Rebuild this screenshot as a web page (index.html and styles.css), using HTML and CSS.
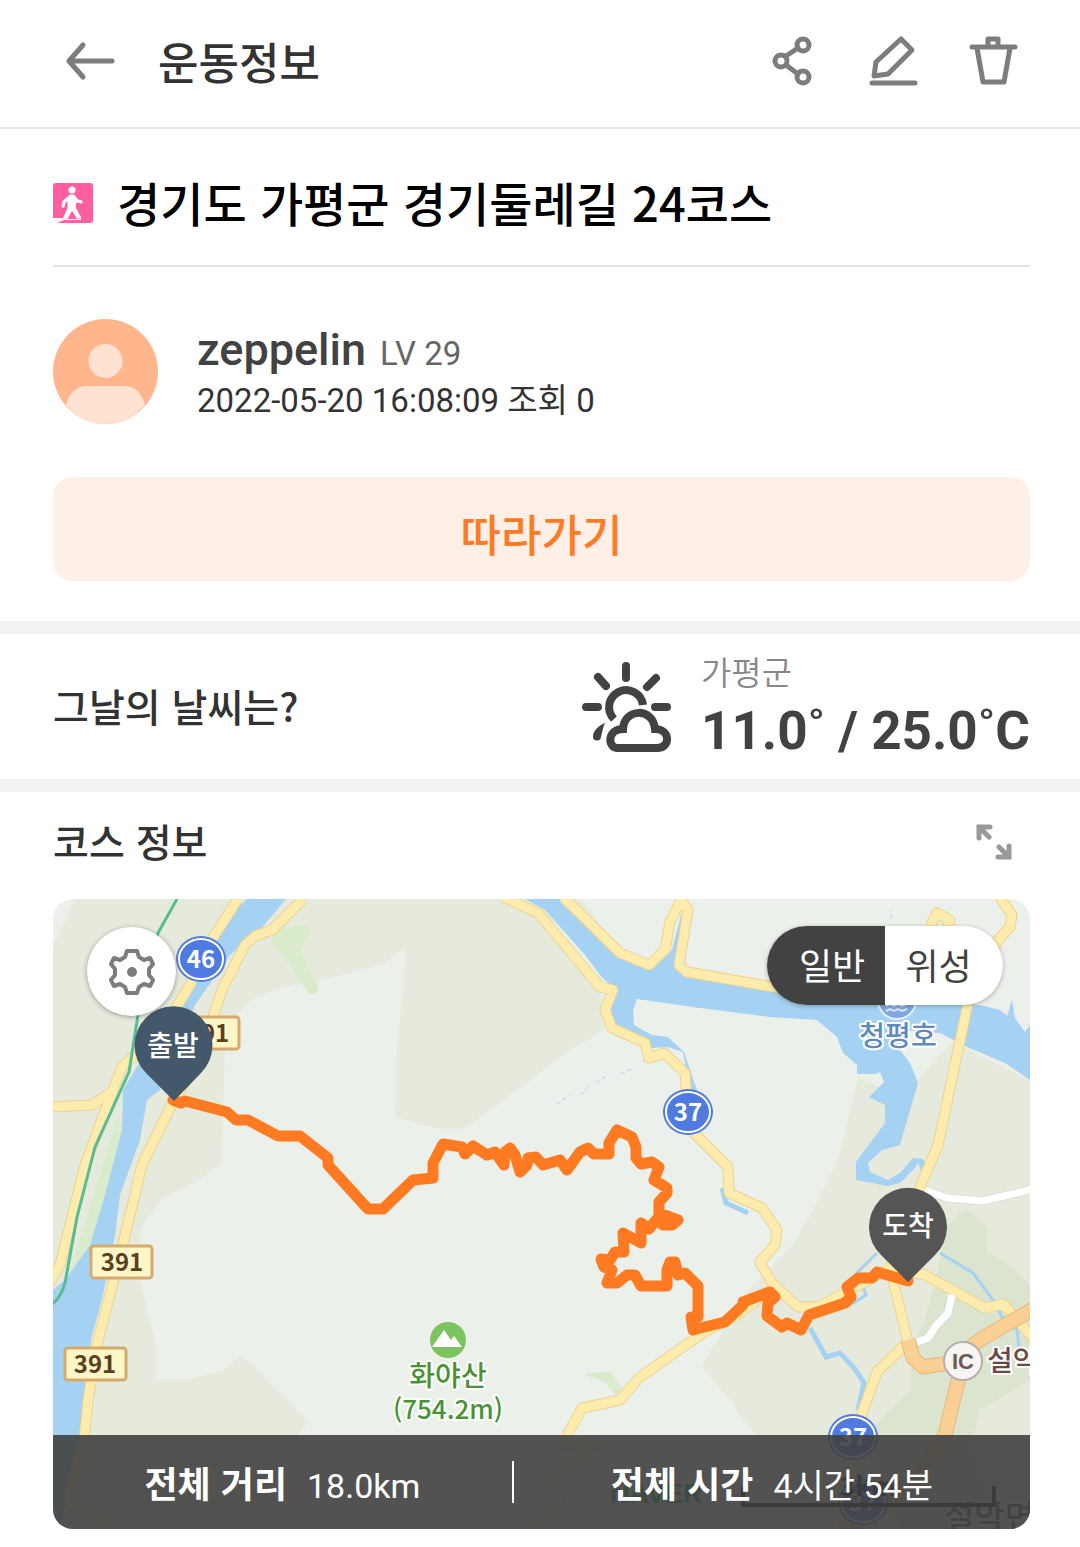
FILE: index.html
```html
<!DOCTYPE html>
<html lang="ko">
<head>
<meta charset="utf-8">
<meta name="viewport" content="width=device-width, initial-scale=1">
<title>운동정보</title>
<link rel="stylesheet" href="styles.css">
</head>
<body>
<header class="topbar">
  <button class="icon-btn" type="button" aria-label="뒤로">
    <svg viewBox="0 0 48 48" class="line-icon"><path d="M18 8 4 24l14 16M4 24h43" stroke-linejoin="round"/></svg>
  </button>
  <h1 class="topbar-title">운동정보</h1>
  <div class="topbar-actions">
    <button class="icon-btn" type="button" aria-label="공유">
      <svg viewBox="0 0 48 48" class="line-icon"><circle cx="34" cy="8" r="6"/><circle cx="12" cy="24" r="6"/><circle cx="34" cy="40" r="6"/><path d="m17 19 12-8M17 28l12 9"/></svg>
    </button>
    <button class="icon-btn" type="button" aria-label="수정">
      <svg viewBox="0 0 48 48" class="line-icon"><path d="M32 2 43 13 19 37 5 39 7 25Z" stroke-linejoin="round"/><path d="M3 46h43"/></svg>
    </button>
    <button class="icon-btn" type="button" aria-label="삭제">
      <svg viewBox="0 0 48 48" class="line-icon"><path d="M19 10V2h10v8M3 10h43" stroke-linejoin="round"/><path d="m8 11 6 34h21l6-34" stroke-linejoin="round"/></svg>
    </button>
  </div>
</header>
<main>
  <section class="intro">
    <div class="course">
      <svg class="walk" viewBox="0 0 40 40" aria-hidden="true">
        <rect width="40" height="40" rx="3" fill="#ff5f9e"/>
        <circle cx="19" cy="7" r="3.5" fill="#fff"/>
        <path d="M17 12h4l4 5 4 1v2l-6-1-1 5 6 11h-4l-5-8-5 9h-4l5-11v-8l-3 3-1 4h-2l1-6Z" fill="#fff" stroke="#fff"/>
        <path d="M0 35h9l1 1h18v1H11l-7 3H0Z" fill="#fff"/>
      </svg>
      <h2 class="course-title">경기도 가평군 경기둘레길 24코스</h2>
    </div>
    <div class="profile">
      <svg class="avatar" viewBox="0 0 105 105" aria-hidden="true">
        <circle cx="52.5" cy="52.5" r="52.5" fill="#ffb68c"/>
        <circle cx="52.5" cy="42" r="17" fill="#ffe2d2"/>
        <path d="M13 86Q18 67 34 67h37q16 0 21 19-17 19-40 19T13 86Z" fill="#ffe2d2"/>
      </svg>
      <div class="profile-text">
        <p class="who"><span class="name">zeppelin</span><span class="level">LV 29</span></p>
        <p class="meta">2022-05-20 16:08:09 조회 0</p>
      </div>
    </div>
    <button class="follow" type="button">따라가기</button>
  </section>
  <section class="weather">
    <h3 class="section-title">그날의 날씨는?</h3>
    <svg class="weather-icon" viewBox="0 0 92 92" aria-hidden="true">
      <g fill="none" stroke="#424242" stroke-width="8">
        <path d="M45 5v12M17 16l8 9M75 17l-9 9M5 46h12M74 46h12" stroke-linecap="round"/>
        <path d="M33 58A17 17 0 1 1 62 44"/>
        <path d="M37 87h40c13-1 12-19-3-19-2-22-31-21-32 0-16 0-16 19-5 19Z"/>
      </g>
      <path d="M24 62c-6 2-12 8-12 13a4 4 0 0 0 8 1c1-4 2-10 4-14Z" fill="#424242"/>
    </svg>
    <div class="reading">
      <p class="place">가평군</p>
      <p class="temps">11.0˚ / 25.0˚C</p>
    </div>
  </section>
  <section class="route">
    <div class="route-head">
      <h3 class="section-title">코스 정보</h3>
      <button class="expand" type="button" aria-label="확대">
        <svg viewBox="0 0 36 36"><path d="M14 3H3v11M3 3l10 10M22 33h11V22M33 33 23 23"/></svg>
      </button>
    </div>
    <div class="map">
      <svg class="map-canvas" viewBox="53 899 977 630" role="img" aria-label="코스 지도">
        <defs>
          <path id="yellow" d="M238 899 205 950 190 985 165 1025 140 1050 122 1067 113 1090 85 1165 70 1225 60 1265 48 1285M50 1107 92 1105 115 1090M303 899 272 930 255 936 245 945 222 990 212 1020 200 1060 175 1098 142 1165 130 1215 115 1275 97 1345 88 1400 84 1440 70 1490V1503L95 1515 102 1529M503 897 538 913 600 987 613 990 605 1010 612 1028 645 1043 649 1058 664 1053 685 1073 687 1100 693 1132 728 1167 729 1193 762 1208 777 1230 775 1245 760 1262 772 1283 798 1307H818L850 1290 890 1268 925 1275 985 1308 1003 1304 1035 1340M563 897 620 953 649 965 665 950 670 922 681 900 688 910 679 965 687 972 773 987 850 1000M930 927 937 913 950 920 945 935M998 895 1012 915 1010 927 998 940 968 1003 938 1145 920 1187 890 1268 908 1342 877 1372 862 1413 850 1460M770 1290 740 1313 703 1333 640 1377 620 1400 582 1408 562 1445 597 1443 557 1477 560 1503 537 1528"/>
        </defs>
        <rect x="53" y="899" width="977" height="630" fill="#ecf0ea"/>
        <g fill="#e5eadc">
          <path d="M75 899H538L600 987 604 1030 570 1050 500 1103 463 1129 435 1128 395 1117 396 1060 405 970V947L383 964 330 978 280 988 250 1000 238 1013 225 1050 221 1165 190 1185 160 1200 140 1230V1280L156 1345 155 1381 185 1380 222 1371 243 1355 308 1421 280 1460 240 1529H53V947Z"/>
          <path d="M563 899H582L600 925Z"/>
          <path d="M858 1078 838 1160 813 1210 793 1245 740 1300 702 1366 730 1400 755 1435 780 1470 830 1529H1030V1080L952 1042 918 1080 885 1090Z"/>
        </g>
        <path fill="#dae4cf" d="m965 1208 22 19v25l23 13 20 20v95l-50 30-10 40 15 40 15 39H900l-30-99 41-40v-40l14-30 15-60 5-30Z"/>
        <g fill="#d9ebca">
          <path d="m275 928 33-2q4 8-8 24l19 38q-2 8-10 6-18-30-38-52Z"/>
          <path d="m584 1374 26-3 14 20-8 4-10-12Z"/>
          <path d="m118 1115-35 115-18 55 20-20 22-65 15-70Z"/>
        </g>
        <g fill="#a5d2f2">
          <path d="m247 899-15 15-12 21-30 50-40 60-15 25-12 20-1 40-17 65-15 50-25 35-12 10v239h7l20-89 11-100 12-45 12-60 5-40 20-55 7-40 13-10 20-50 15-35 35-50 30-25 26-31Z"/>
          <path d="M525 899H563L620 953 649 965 672 950 681 915H684L679 965 710 977 773 987 860 1005H980L1000 1010 1007 1016 1012 1000 1015 1018 1025 1032 1030 1025V1080L1005 1063 967 1047 940 1033 900 1030V1050L910 1063 918 1083 900 1145 882 1150 868 1163 870 1172 888 1180 900 1173 913 1158 923 1159 927 1167 922 1173 918 1163 915 1168 900 1183 888 1186 856 1180V1162L885 1123V1105L869 1097 884 1082 880 1072 875 1074H857V1065L843 1053 837 1037 817 1020 770 1017 700 1008 637 999 633 1010 634 1025 652 1035 668 1037 684 1052 697 1090H690L683 1052 668 1047 652 1048 643 1040 612 1025 610 1005 615 990 600 975 585 955 545 910Z"/>
        </g>
        <g fill="none" stroke="#a5d2f2">
          <path d="m810 1328 16 29 14-4 15 16 9 14-6 27" stroke-width="5"/>
          <path d="m877 1253-19 19 8 23-16 10M940 1253l33 20 20 27 9 17 15 13 2 17" stroke-width="3"/>
          <path d="m722 1188 4 15 22 10M757 1260l4 5" stroke-width="5"/>
          <path d="m557 1104 13-9m11 0 7-9m8-3 10-7m15-2 12-6m10-6 6-8M891 919v-8" stroke-dasharray="4 3"/>
        </g>
        <g fill="none" stroke-linejoin="round">
          <use href="#yellow" stroke="#ecd28e" stroke-width="11"/>
          <use href="#yellow" stroke="#fdecae" stroke-width="9"/>
          <path stroke="#dce0dc" stroke-width="9" d="m925 1190 22 8 36 3 50-12M952 1295l-4 18-13 14-7 11-11 4"/>
          <path stroke="#fff" stroke-width="7" d="m925 1190 22 8 36 3 50-12M952 1295l-4 18-13 14-7 11-11 4"/>
          <path stroke="#e6b77c" stroke-width="15" d="m908 1340 5 18 10 9 32-5 22-20 11-7 47-27M963 1361l-18 74-25 45-40 30-40 19"/>
          <path stroke="#f9cf93" stroke-width="13" d="m908 1340 5 18 10 9 32-5 22-20 11-7 47-27M963 1361l-18 74-25 45-40 30-40 19"/>
          <path stroke="#56bd93" stroke-width="3" d="m177 899-19 34-20 82-9 57-34 75-18 70-12 66q-4 15-14 22"/>
        </g>
        <g class="shield">
          <rect x="178" y="1017" width="61" height="32" rx="3"/><text x="208" y="1042">391</text>
          <rect x="91" y="1246" width="61" height="32" rx="3"/><text x="122" y="1271">391</text>
          <rect x="65" y="1348" width="61" height="32" rx="3"/><text x="95" y="1373">391</text>
        </g>
        <g class="national">
          <ellipse class="rim" cx="201" cy="959" rx="25" ry="23"/><ellipse cx="201" cy="959" rx="22" ry="20"/><text x="201" y="968">46</text>
          <ellipse class="rim" cx="688" cy="1112" rx="25" ry="23"/><ellipse cx="688" cy="1112" rx="22" ry="20"/><text x="688" y="1121">37</text>
          <ellipse class="rim" cx="853" cy="1437" rx="25" ry="23"/><ellipse cx="853" cy="1437" rx="22" ry="20"/><text x="853" y="1446">37</text>
          <ellipse class="rim" cx="863" cy="1502" rx="25" ry="23"/><ellipse cx="863" cy="1502" rx="22" ry="20"/><text x="863" y="1511">37</text>
        </g>
        <circle cx="897" cy="1000" r="19" fill="#7fa8e3" stroke="#e6f1fb" stroke-width="2"/>
        <path d="m886 1006 4-2 4 2 4-2 4 2 5-2M886 1011l4-2 4 2 4-2 4 2 5-2" fill="none" stroke="#d5e6fa" stroke-width="2"/>
        <text class="label lake" x="898" y="1046">청평호</text>
        <circle cx="448" cy="1340" r="18" fill="#7cc460"/>
        <path d="m432 1347 12-17 7 10 3-4 8 11Z" fill="#fff"/>
        <text class="label peak" x="448" y="1386">화야산</text>
        <text class="label peak height" x="448" y="1419">(754.2m)</text>
        <circle cx="963" cy="1361" r="19" fill="#f8f4f4" stroke="#b9aeae" stroke-width="2"/>
        <text class="ic" x="963" y="1369">IC</text>
        <text class="label junction" x="987" y="1371">설악IC</text>
        <text class="label town" x="944" y="1529">설악면</text>
        <rect x="597" y="1473" width="126" height="41" rx="20" fill="#fff" opacity=".3"/>
        <text class="brand" x="610" y="1503">NAVER</text>
        <path d="M743 1486v19h251v-19" fill="none" stroke="#111" stroke-width="4"/>
        <text class="scale" x="868" y="1496">3km</text>
        <path class="track" d="m173 1100 8 3 4-2 42 11 9 8h12l30 16h22l28 22v7l40 44h15l30-29 20-2v-15l10-19 19 3 3 7 8-8 14 9 8-3 9 13 1-13 5-4 5 7 5 17 7-7 1-7 8-1 7 8 17-5 7 10 13-18 8-4 6 6h15v-11l8-13 15 7 4 10v11l5 6 11-2 7 5-5 13 13 8v5l-8 9v11l19 7-6 5h-9l-6-6-8 10-8-6v20l-18-10 1 19h-9l-5 8-9-1 3 8 8 3-5 13h10l10-8h8l6 11h26v-16l3-8h5l3 13 7-2 13 13v31h-7l2 13 7-2 25-6 18-17v-3l27-10 5 5-7 6-1 13 15 11 5-4 14 7 8-15 36-12 6-6-4-10 11-9h14l5-6 31 9"/>
        <path fill="#44586b" d="M174 1101 146 1073a39 39 0 1 1 55 0Z"/>
        <text class="pin" x="173" y="1056">출발</text>
        <path fill="#555" d="M908 1282 881 1255a39 39 0 1 1 54 0Z"/>
        <text class="pin" x="908" y="1236">도착</text>
      </svg>
      <button class="gear" type="button" aria-label="지도 설정">
        <svg viewBox="-24 -24 48 48"><path d="M-5-21H5L7-15 12-12 18-14 21-8 17-3V3L21 8 18 14 12 12 7 15 5 21H-5L-7 15-12 12-18 14-21 8-17 3V-3L-21-8-18-14-12-12-7-15Z" fill="none" stroke="#7d7d7d" stroke-width="4" stroke-linejoin="round"/><circle r="5" fill="#7d7d7d"/></svg>
      </button>
      <div class="toggle">
        <button class="toggle-item is-on" type="button" aria-pressed="true">일반</button>
        <button class="toggle-item" type="button" aria-pressed="false">위성</button>
      </div>
      <dl class="totals">
        <div class="total"><dt>전체 거리</dt><dd>18.0km</dd></div>
        <div class="total"><dt>전체 시간</dt><dd>4시간 54분</dd></div>
      </dl>
    </div>
  </section>
</main>
</body>
</html>
```
FILE: styles.css
```css
* {
  box-sizing: border-box;
}

body,
h1,
h2,
h3,
p,
dl,
dd {
  margin: 0;
}

body {
  background: #fff;
  color: #333;
  font-family: "Noto Sans CJK KR", sans-serif;
}

button {
  padding: 0;
  border: 0;
  background: none;
  color: inherit;
  font: inherit;
}

svg {
  display: block;
}

.topbar {
  display: flex;
  align-items: center;
  height: 129px;
  padding: 0 63px 6px 65px;
  border-bottom: 2px solid #e4e4e4;
}

.topbar-title {
  flex: 1;
  margin-left: 45px;
  font-size: 44px;
  font-weight: 500;
}

.topbar-actions {
  display: flex;
  gap: 52px;
}

.icon-btn {
  width: 48px;
  height: 48px;
}

.line-icon {
  width: 48px;
  height: 48px;
  overflow: visible;
  fill: none;
  stroke: #7d7d7d;
  stroke-width: 5;
  stroke-linecap: round;
}

.intro {
  padding: 0 50px 40px 53px;
}

.course {
  display: flex;
  align-items: center;
  gap: 24px;
  height: 138px;
  padding-top: 12px;
  border-bottom: 2px solid #e4e4e4;
}

.walk {
  width: 40px;
  height: 40px;
}

.course-title {
  padding-bottom: 4px;
  color: #000;
  font-size: 47px;
  font-weight: 500;
}

.profile {
  display: flex;
  align-items: flex-end;
  gap: 39px;
  margin: 52px 0 53px;
}

.avatar {
  width: 105px;
  height: 105px;
}

.profile-text {
  font-family: Roboto, "Noto Sans CJK KR", sans-serif;
  font-size: 33px;
  line-height: 47px;
}

.name {
  color: #424242;
  font-size: 45px;
  font-weight: 500;
}

.level {
  margin-left: 14px;
  color: #666;
}

.follow {
  display: block;
  width: 100%;
  height: 104px;
  padding-top: 8px;
  border-radius: 20px;
  background: #fff0e7;
  color: #ff7a26;
  font-size: 44px;
  font-weight: 500;
}

.weather {
  display: flex;
  align-items: center;
  height: 171px;
  padding: 0 50px 0 53px;
  border: solid #f1f2f4;
  border-width: 13px 0;
}

.section-title {
  flex: 1;
  padding-bottom: 4px;
  font-size: 39px;
  font-weight: 500;
}

.weather-icon {
  width: 92px;
  height: 92px;
  margin-right: 28px;
}

.place {
  color: #888;
  font-size: 33px;
  font-weight: 350;
  line-height: 48px;
}

.temps {
  color: #424242;
  font-family: Roboto, "Noto Sans CJK KR", sans-serif;
  font-size: 53px;
  font-weight: 700;
  line-height: 72px;
}

.route {
  padding: 0 50px 18px 53px;
}

.route-head {
  display: flex;
  align-items: center;
  height: 107px;
  padding: 0 18px 8px 0;
}

.expand svg {
  width: 36px;
  height: 36px;
  fill: none;
  stroke: #999;
  stroke-width: 5;
  stroke-linecap: round;
}

.map {
  position: relative;
  overflow: hidden;
  border-radius: 20px;
}

.map-canvas {
  width: 100%;
  height: auto;
}

.shield rect {
  fill: #fff6c8;
  stroke: #d5aa6c;
  stroke-width: 3;
}

.shield text {
  fill: #59401f;
  font-size: 24px;
  font-weight: 700;
  text-anchor: middle;
}

.national ellipse {
  fill: #4f7be0;
  stroke: #fff;
  stroke-width: 2;
}

.national .rim {
  stroke: none;
}

.national text {
  fill: #fff;
  font-size: 24px;
  font-weight: 700;
  text-anchor: middle;
}

.label {
  stroke: #fff;
  stroke-width: 4;
  stroke-linejoin: round;
  paint-order: stroke;
  font-size: 28px;
  font-weight: 500;
  text-anchor: middle;
}

.lake {
  fill: #5f8ac0;
}

.peak {
  fill: #4a9137;
}

.height {
  font-size: 26px;
}

.junction,
.town {
  fill: #6b4a42;
  text-anchor: start;
}

.town {
  font-size: 33px;
}

.ic {
  fill: #6b5b58;
  font-family: "Liberation Sans", sans-serif;
  font-size: 22px;
  font-weight: 700;
  text-anchor: middle;
}

.brand {
  fill: #03a94d;
  font-family: "Liberation Sans", sans-serif;
  font-size: 27px;
  font-weight: 700;
}

.scale {
  fill: #111;
  font-size: 26px;
  font-weight: 700;
  text-anchor: middle;
}

.track {
  fill: none;
  stroke: #ff7a20;
  stroke-width: 11;
  stroke-linejoin: round;
  stroke-linecap: round;
}

.pin {
  fill: #fff;
  font-size: 28px;
  font-weight: 500;
  text-anchor: middle;
}

.gear {
  position: absolute;
  top: 28px;
  left: 34px;
  display: grid;
  place-items: center;
  width: 89px;
  height: 89px;
  border-radius: 50%;
  background: #fff;
  box-shadow: 0 1px 5px rgba(0, 0, 0, 0.35);
}

.gear svg {
  width: 48px;
  height: 48px;
}

.toggle {
  position: absolute;
  top: 27px;
  right: 27px;
  display: flex;
  overflow: hidden;
  border-radius: 40px;
  background: #fff;
  box-shadow: 0 1px 4px rgba(0, 0, 0, 0.3);
}

.toggle-item {
  width: 118px;
  height: 79px;
  padding: 0 11px 3px 0;
  color: #424242;
  font-size: 36px;
}

.toggle-item.is-on {
  padding: 0 0 3px 12px;
  background: #424242;
  color: #fff;
}

.totals {
  position: absolute;
  right: 0;
  bottom: 0;
  left: 0;
  display: flex;
  align-items: center;
  height: 94px;
  background: rgba(64, 64, 64, 0.9);
  color: #fff;
  font-size: 36px;
  line-height: 42px;
}

.total {
  display: flex;
  flex: 8;
  align-items: baseline;
  justify-content: center;
  gap: 20px;
  height: 42px;
}

.total + .total {
  flex: 9;
  border-left: 2px solid #fff;
}

.total dt {
  font-weight: 700;
}

.total dd {
  font-family: Roboto, "Noto Sans CJK KR", sans-serif;
  font-size: 34px;
}
```
